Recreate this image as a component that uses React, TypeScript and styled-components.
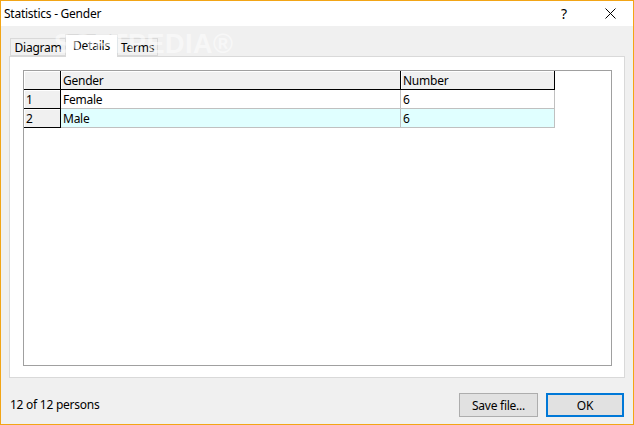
import React from "react";
import styled, { createGlobalStyle } from "styled-components";

const Global = createGlobalStyle`
  html, body { margin: 0; padding: 0; background: #f0f0f0; }
  body { font-family: "Noto Sans", "Liberation Sans", sans-serif; font-size: 12px; letter-spacing: -0.25px; color: #000; }
  * { box-sizing: border-box; }
`;

const Window = styled.div`
  position: relative;
  width: 634px;
  height: 425px;
  border: 1px solid #f2a516;
  display: flex;
  flex-direction: column;
  background: #f0f0f0;
  overflow: hidden;
`;

const TitleBar = styled.div`
  height: 25px;
  background: #fff;
  display: flex;
  align-items: center;
  padding-left: 3px;
  flex-shrink: 0;
`;

const Title = styled.div`
  flex: 1;
  font-size: 12px;
`;

const TitleButton = styled.div<{ $w: number }>`
  width: ${(p) => p.$w}px;
  height: 25px;
  display: flex;
  align-items: center;
  justify-content: center;
  font-size: 14px;
`;

const Body = styled.div`
  flex: 1;
  display: flex;
  flex-direction: column;
  padding: 8px 8px 0 8px;
`;

const TabStrip = styled.div`
  display: flex;
  align-items: flex-end;
  height: 22px;
  padding-left: 1px;
  position: relative;
  z-index: 1;
`;

const Tab = styled.div<{ $active?: boolean; $w: number }>`
  width: ${(p) => p.$w}px;
  height: ${(p) => (p.$active ? 23 : 18)}px;
  margin-bottom: ${(p) => (p.$active ? -1 : 0)}px;
  background: ${(p) => (p.$active ? "#fff" : "#f0f0f0")};
  border: 1px solid #d9d9d9;
  border-bottom: ${(p) => (p.$active ? "none" : "1px solid #d9d9d9")};
  margin-left: ${(p) => (p.$active ? -1 : 0)}px;
  margin-right: ${(p) => (p.$active ? -1 : 0)}px;
  display: flex;
  align-items: ${(p) => (p.$active ? "flex-start" : "center")};
  padding-top: ${(p) => (p.$active ? 2 : 0)}px;
  justify-content: center;
  font-size: 12px;
  white-space: nowrap;
  position: relative;
  z-index: ${(p) => (p.$active ? 2 : 1)};
`;

const TabPanel = styled.div`
  height: 322px;
  background: #fff;
  border: 1px solid #d9d9d9;
  padding: 13px 12px 11px 13px;
  display: flex;
`;

const GridBox = styled.div`
  flex: 1;
  border: 1px solid #a0a0a0;
  background: #fff;
`;

const Grid = styled.div`
  display: grid;
  grid-template-columns: 37px 340px 154px;
  grid-auto-rows: 19px;
`;

const Cell = styled.div<{ $fixed?: boolean; $alt?: boolean }>`
  background: ${(p) => (p.$fixed ? "#f0f0f0" : p.$alt ? "#e0ffff" : "#fff")};
  border-right: 1px solid ${(p) => (p.$fixed ? "#000" : "#c0c0c0")};
  border-bottom: 1px solid ${(p) => (p.$fixed ? "#000" : "#c0c0c0")};
  box-shadow: ${(p) => (p.$fixed ? "inset 1px 1px 0 #fff" : "none")};
  padding-left: 2px;
  padding-top: 1px;
  display: flex;
  align-items: center;
  font-size: 12px;
  white-space: nowrap;
`;

const Footer = styled.div`
  flex: 1;
  display: flex;
  align-items: flex-start;
  padding: 15px 1px 0 1px;
`;

const Status = styled.div`
  flex: 1;
  font-size: 12px;
  line-height: 24px;
`;

const Button = styled.div<{ $default?: boolean; $w: number }>`
  width: ${(p) => p.$w}px;
  height: 24px;
  background: #e1e1e1;
  border: ${(p) => (p.$default ? "2px solid #0078d7" : "1px solid #adadad")};
  display: flex;
  align-items: center;
  justify-content: center;
  font-size: 12px;
  margin-left: ${(p) => (p.$default ? 8 : 0)}px;
`;

const Watermark = styled.div`
  position: absolute;
  left: 53px;
  top: 28px;
  font-family: "Liberation Sans", sans-serif;
  font-weight: bold;
  font-size: 27px;
  letter-spacing: 0.5px;
  color: rgba(255, 255, 255, 0.5);
  pointer-events: none;
  z-index: 5;
`;

const rows = [
  { n: "1", g: "Female", c: "6" },
  { n: "2", g: "Male", c: "6" },
];

export default function App() {
  return (
    <>
      <Global />
      <Window>
        <TitleBar>
          <Title>Statistics - Gender</Title>
          <TitleButton $w={46}>?</TitleButton>
          <TitleButton $w={46}>
            <svg width="11" height="11" viewBox="0 0 11 11">
              <path d="M0.5 0.5 L10.5 10.5 M10.5 0.5 L0.5 10.5" stroke="#000" strokeWidth="1" />
            </svg>
          </TitleButton>
        </TitleBar>
        <Body>
          <TabStrip>
            <Tab $w={56}>Diagram</Tab>
            <Tab $w={53} $active>Details</Tab>
            <Tab $w={41}>Terms</Tab>
          </TabStrip>
          <TabPanel>
            <GridBox>
              <Grid>
                <Cell $fixed />
                <Cell $fixed>Gender</Cell>
                <Cell $fixed>Number</Cell>
                {rows.map((r, i) => (
                  <React.Fragment key={r.n}>
                    <Cell $fixed>{r.n}</Cell>
                    <Cell $alt={i % 2 === 1}>{r.g}</Cell>
                    <Cell $alt={i % 2 === 1}>{r.c}</Cell>
                  </React.Fragment>
                ))}
              </Grid>
            </GridBox>
          </TabPanel>
          <Footer>
            <Status>12 of 12 persons</Status>
            <Button $w={79}>Save file...</Button>
            <Button $w={78} $default>OK</Button>
          </Footer>
        </Body>
        <Watermark>SOFTPEDIA®</Watermark>
      </Window>
    </>
  );
}
